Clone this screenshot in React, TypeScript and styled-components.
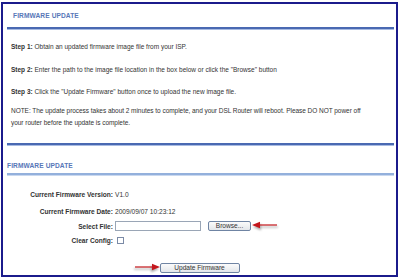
import React from "react";
import styled, { createGlobalStyle } from "styled-components";

const GlobalStyle = createGlobalStyle`
  html, body {
    margin: 0;
    padding: 0;
    background: #ffffff;
  }
  body {
    font-family: "Liberation Sans", Arial, sans-serif;
    color: #333333;
  }
`;

const Arrow = ({ dir }: { dir: "left" | "right" }) => (
  <ArrowSvg width="26" height="10" viewBox="0 0 26 10" $dir={dir}>
    <line x1="6" y1="4" x2="25" y2="4" stroke="#c4161c" strokeWidth="1.2" />
    <polygon points="0,4 8,0.8 8,7.2" fill="#c4161c" />
  </ArrowSvg>
);

export default function App() {
  return (
    <>
      <GlobalStyle />
      <Frame>
        <HeaderTitle $indent={10} $top={7} $height={16}>
          FIRMWARE UPDATE
        </HeaderTitle>
        <Rule $tone="dark" />
        <Steps>
          <Para $after={11}>
            <b>Step 1:</b> Obtain an updated firmware image file from your ISP.
          </Para>
          <Para $after={10}>
            <b>Step 2:</b> Enter the path to the image file location in the box
            below or click the "Browse" button
          </Para>
          <Para $after={7}>
            <b>Step 3:</b> Click the "Update Firmware" button once to upload the
            new image file.
          </Para>
          <Note $after={0}>
            NOTE: The update process takes about 2 minutes to complete, and your
            DSL Router will reboot. Please DO NOT power off
            <br />
            your router before the update is complete.
          </Note>
        </Steps>
        <Rule $tone="dark" />
        <HeaderTitle $indent={4} $top={16} $height={12}>
          FIRMWARE UPDATE
        </HeaderTitle>
        <Rule $tone="light" />
        <Form>
          <Label>Current Firmware Version:</Label>
          <Value>V1.0</Value>
          <Label>Current Firmware Date:</Label>
          <Value>2009/09/07 10:23:12</Value>
          <Label>Select File:</Label>
          <Value>
            <FileBox />
            <Button $w={43}>Browse...</Button>
            <Arrow dir="left" />
          </Value>
          <Label>Clear Config:</Label>
          <Value>
            <Check />
          </Value>
        </Form>
        <SubmitRow>
          <Arrow dir="right" />
          <Button $w={80}>Update Firmware</Button>
        </SubmitRow>
      </Frame>
    </>
  );
}

const Frame = styled.div`
  box-sizing: border-box;
  width: 397px;
  height: 275px;
  margin: 2px 0 0 1px;
  border: 2px solid #1b1b8c;
  background: #ffffff;
  display: flex;
  flex-direction: column;
`;

const HeaderTitle = styled.div<{ $indent: number; $top: number; $height: number }>`
  font-size: 6.6px;
  font-weight: 700;
  color: #5877b8;
  line-height: 10px;
  padding: ${(p) => p.$top}px 0 0 ${(p) => p.$indent}px;
  height: ${(p) => p.$height}px;
  letter-spacing: 0.1px;
`;

const Rule = styled.div<{ $tone: "dark" | "light" }>`
  margin: 0 2px 0 4px;
  height: 2px;
  background: ${(p) => (p.$tone === "dark" ? "#4a69b2" : "#93b0dc")};
  box-shadow: 0 1px 0 ${(p) => (p.$tone === "dark" ? "#a8bbe2" : "#c9d8ef")};
`;

const Steps = styled.div`
  padding: 12px 1px 14px 8px;
  display: flex;
  flex-direction: column;
`;

const Para = styled.p<{ $after: number }>`
  margin: 0 0 ${(p) => p.$after}px;
  font-size: 6.5px;
  line-height: 12px;
  color: #333333;
  white-space: nowrap;

  b {
    font-weight: 700;
  }
`;

const Note = styled(Para)`
  letter-spacing: -0.04px;
`;

const Form = styled.div`
  display: grid;
  grid-template-columns: 110px 1fr;
  column-gap: 2px;
  grid-template-rows: 14px 20px 10px 18px;
  margin-top: 12px;
  align-items: center;
`;

const Label = styled.div`
  font-size: 6.6px;
  font-weight: 700;
  color: #333333;
  text-align: right;
`;

const Value = styled.div`
  font-size: 6.6px;
  color: #333333;
  display: flex;
  align-items: center;
`;

const FileBox = styled.div`
  box-sizing: border-box;
  width: 86px;
  height: 10px;
  border: 1px solid #9aa6b6;
  background: #ffffff;
  margin-right: 7px;
`;

const Button = styled.div<{ $w: number }>`
  box-sizing: border-box;
  width: ${(p) => p.$w}px;
  height: 10px;
  border: 1px solid #6f84a3;
  border-radius: 2px;
  background: linear-gradient(#fbfbfb, #e3e6ea);
  font-size: 6.6px;
  line-height: 8px;
  text-align: center;
  color: #333333;
`;

const Check = styled.div`
  box-sizing: border-box;
  width: 7px;
  height: 7px;
  margin-left: 2px;
  border: 1px solid #7b8aa6;
  background: #ffffff;
`;

const SubmitRow = styled.div`
  display: flex;
  align-items: center;
  justify-content: center;
  padding-right: 26px;
  margin-top: 14px;
`;

const ArrowSvg = styled.svg<{ $dir: "left" | "right" }>`
  display: block;
  flex: none;
  margin-left: ${(p) => (p.$dir === "left" ? "1px" : "0")};
  transform: ${(p) => (p.$dir === "right" ? "scaleX(-1)" : "none")};
  filter: drop-shadow(1px 2px 1px rgba(0, 0, 0, 0.35));
`;
